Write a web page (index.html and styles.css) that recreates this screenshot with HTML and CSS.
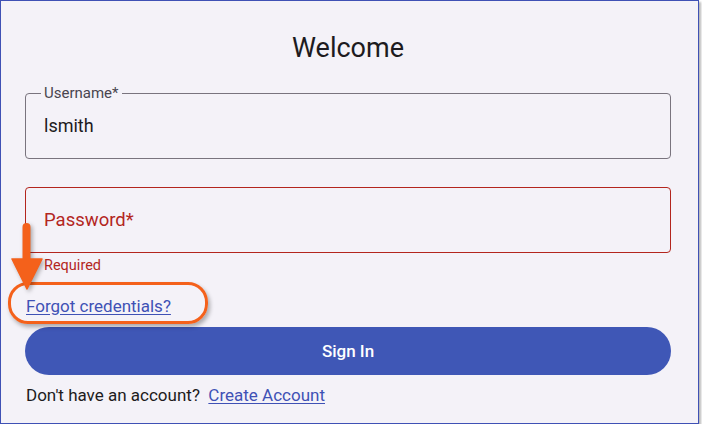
FILE: index.html
```html
<!DOCTYPE html>
<html lang="en">
<head>
<meta charset="utf-8">
<title>Welcome</title>
<link rel="stylesheet" href="styles.css">
</head>
<body>
<div class="frame">
  <h1 class="title">Welcome</h1>
  <div class="field">
    <span class="field-label">Username*</span>
    <span class="field-value">lsmith</span>
  </div>
  <div class="field field-error">
    <span class="field-placeholder">Password*</span>
  </div>
  <div class="helper">Required</div>
  <div class="forgot-row"><a class="link" href="#">Forgot credentials?</a></div>
  <button class="signin" type="button">Sign In</button>
  <p class="signup">Don't have an account?&nbsp;&nbsp;<a class="link" href="#">Create Account</a></p>

  <div class="callout-ring"></div>
  <svg class="callout-arrow" width="34" height="70" viewBox="0 0 34 70">
    <path d="M15.5 5 L15.5 38" stroke="#f4611b" stroke-width="8" stroke-linecap="round" fill="none"/>
    <path d="M1 37 L31 37 L16 67 Z" fill="#f4611b" stroke="#f4611b" stroke-width="1.5" stroke-linejoin="round"/>
  </svg>
</div>
</body>
</html>
```

FILE: styles.css
```css
html, body {
  margin: 0;
  padding: 0;
  background: #ffffff;
}

body {
  font-family: Roboto, "Liberation Sans", sans-serif;
  color: #1d1b20;
}

.frame {
  position: relative;
  box-sizing: border-box;
  width: 699px;
  height: 424px;
  border: 1px solid #3f51b5;
  background: #f4f2f8;
  box-shadow: 2px 2px 2px rgba(0, 0, 0, 0.28);
  padding: 31px 27px 0 24px;
  display: flex;
  flex-direction: column;
}

.title {
  margin: 0;
  font-size: 27px;
  line-height: 32px;
  font-weight: 400;
  text-align: center;
  color: #1d1b20;
}

.field {
  position: relative;
  box-sizing: border-box;
  height: 66px;
  border: 1px solid #79747e;
  border-radius: 4px;
  padding: 0 18px;
  display: flex;
  align-items: center;
  margin-top: 29px;
}

.field-label {
  position: absolute;
  top: -10px;
  left: 15px;
  padding: 0 3px;
  background: #f4f2f8;
  font-size: 15px;
  line-height: 18px;
  color: #49454f;
}

.field-value {
  font-size: 18px;
  line-height: 24px;
  color: #1d1b20;
}

.field-error {
  border-color: #b3261e;
  margin-top: 28px;
}

.field-placeholder {
  font-size: 18.5px;
  line-height: 24px;
  color: #b3261e;
}

.helper {
  margin-top: 4px;
  padding-left: 19px;
  font-size: 14.5px;
  line-height: 18px;
  color: #b3261e;
}

.forgot-row {
  margin-top: 20px;
  padding-left: 1px;
  font-size: 17px;
  line-height: 22px;
}

.link {
  color: #3f51b5;
  text-decoration: underline;
  text-underline-offset: 2px;
}

.signin {
  margin-top: 10px;
  height: 48px;
  border: none;
  border-radius: 24px;
  background: #3f57b6;
  color: #ffffff;
  font-family: Roboto, "Liberation Sans", sans-serif;
  font-size: 17px;
  font-weight: 500;
  cursor: pointer;
}

.signup {
  margin: 9px 0 0;
  padding-left: 1px;
  font-size: 17px;
  line-height: 22px;
  color: #1d1b20;
}

.callout-ring {
  position: absolute;
  left: 7px;
  top: 281px;
  width: 194px;
  height: 36px;
  border: 3px solid #f4611b;
  border-radius: 20px;
  box-shadow: 2px 3px 4px rgba(0, 0, 0, 0.3);
}

.callout-arrow {
  position: absolute;
  left: 10px;
  top: 221px;
  overflow: visible;
  filter: drop-shadow(2px 2px 2px rgba(0, 0, 0, 0.3));
}
```
